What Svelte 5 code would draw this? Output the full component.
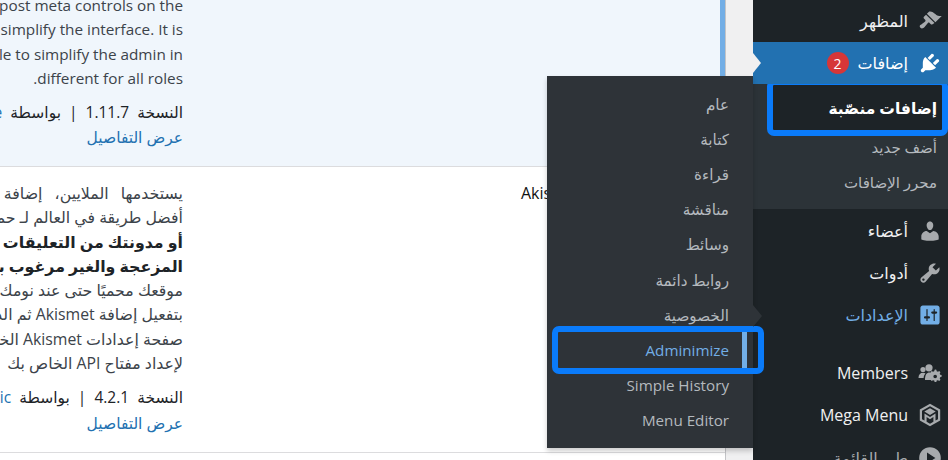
<script>
  const settings = [
    { label: "عام" },
    { label: "كتابة" },
    { label: "قراءة" },
    { label: "مناقشة" },
    { label: "وسائط" },
    { label: "روابط دائمة" },
    { label: "الخصوصية" },
    { label: "Adminimize", current: true },
    { label: "Simple History" },
    { label: "Menu Editor" },
  ];
</script>

<div class="page" dir="rtl">
  <nav class="sidebar">
    <a class="item">
      <svg class="icon" viewBox="0 0 20 20"><path d="M14.48 11.06L7.41 3.99l1.5-1.5c.5-.56 2.3-.47 3.51.32 1.21.8 1.43 1.28 2.91 2.1 1.18.64 2.45 1.26 4.45.85zm-.71.71L6.7 4.7 4.93 6.47c-.39.39-.39 1.02 0 1.41l1.06 1.06c.39.39.39 1.03 0 1.42-.6.6-1.43 1.11-2.21 1.69-.35.26-.7.53-1.01.84C1.43 13.23.91 14.45 2.02 15.56c1.11 1.11 2.33.59 3.67-.75.31-.31.58-.66.84-1.01.58-.78 1.09-1.61 1.69-2.21.39-.39 1.03-.39 1.42 0l1.06 1.06c.39.39 1.02.39 1.41 0z" /></svg>
      <span>المظهر</span>
    </a>
    <a class="item active">
      <svg class="icon" viewBox="0 0 20 20"><path d="M13.11 4.36L9.87 7.6 8 5.73l3.24-3.24c.35-.34 1.05-.2 1.56.32.52.51.66 1.21.31 1.55zm-8 1.77l.91-1.12 9.01 9.01-1.19.84c-.71.71-2.63 1.16-3.82 1.16H6.14L4.9 17.26c-.59.59-1.54.59-2.12 0-.59-.58-.59-1.53 0-2.12l1.24-1.24v-3.88c0-1.13.4-3.19 1.09-3.89zm7.26 3.97l3.24-3.24c.34-.35 1.04-.21 1.55.31.52.51.66 1.21.31 1.55l-3.24 3.25z" /></svg>
      <span>إضافات</span>
      <span class="badge">2</span>
    </a>
    <div class="sub">
      <a class="sub-item boxed">إضافات منصّبة</a>
      <a class="sub-item">أضف جديد</a>
      <a class="sub-item">محرر الإضافات</a>
    </div>
    <a class="item">
      <svg class="icon" viewBox="0 0 20 20"><path d="M10 9.25c-2.27 0-2.73-3.44-2.73-3.44C7 4.02 7.82 2 9.97 2c2.16 0 2.98 2.02 2.71 3.81 0 0-.41 3.44-2.68 3.44zm0 2.57L12.72 10c2.39 0 4.52 2.33 4.52 4.53v2.49s-3.65 1.13-7.24 1.13c-3.65 0-7.24-1.13-7.24-1.13v-2.49c0-2.25 1.94-4.48 4.47-4.48z" /></svg>
      <span>أعضاء</span>
    </a>
    <a class="item">
      <svg class="icon" viewBox="0 0 20 20"><path d="M16.68 9.77c-1.34 1.34-3.3 1.67-4.95.99l-5.41 6.52c-.99.99-2.59.99-3.58 0s-.99-2.59 0-3.57l6.52-5.42c-.68-1.65-.35-3.61.99-4.95 1.28-1.28 3.12-1.62 4.72-1.06l-2.89 2.89 2.82 2.82 2.86-2.87c.53 1.58.18 3.39-1.08 4.67zM3.81 16.21c.4.39 1.04.39 1.43 0 .4-.4.4-1.04 0-1.43-.39-.4-1.03-.4-1.43 0-.39.39-.39 1.03 0 1.43z" /></svg>
      <span>أدوات</span>
    </a>
    <a class="item settings">
      <svg class="icon" viewBox="0 0 20 20"><path d="M18 16V4c0-1.1-.9-2-2-2H4c-1.1 0-2 .9-2 2v12c0 1.1.9 2 2 2h12c1.1 0 2-.9 2-2zM8 11h1c.55 0 1 .45 1 1s-.45 1-1 1H8v1.5c0 .28-.22.5-.5.5s-.5-.22-.5-.5V13H6c-.55 0-1-.45-1-1s.45-1 1-1h1V5.5c0-.28.22-.5.5-.5s.5.22.5.5V11zm5-2h-1c-.55 0-1-.45-1-1s.45-1 1-1h1V5.5c0-.28.22-.5.5-.5s.5.22.5.5V7h1c.55 0 1 .45 1 1s-.45 1-1 1h-1v5.5c0 .28-.22.5-.5.5s-.5-.22-.5-.5V9z" /></svg>
      <span>الإعدادات</span>
    </a>
    <div class="sep"></div>
    <a class="item">
      <svg class="icon" viewBox="0 0 24 24">
        <circle cx="5" cy="8.5" r="2.6" />
        <path d="M0.5 17c0-3.2 1.6-5.2 4.6-5.2 1 0 1.8.2 2.4.6-1.2 1.2-1.8 2.8-1.9 4.6z" />
        <circle cx="11" cy="6.8" r="3.6" />
        <path d="M7 19c0-5 1.6-7.4 4.6-7.4 1.1 0 2 .3 2.8.8-.3 1.7-1.2 2.6-1.2 3.5s.9 1.600 1.100 3.100z" />
        <path fill-rule="evenodd" d="M18 10.500l1.100.2.4 1.500 1.300.5 1.300-.8 1.300 1.300-.8 1.300.5 1.300 1.500.4v1.800l-1.500.4-.5 1.300.8 1.300-1.300 1.300-1.300-.8-1.300.5-.4 1.500h-1.800l-.4-1.500-1.300-.5-1.300.8-1.300-1.300.8-1.300-.5-1.300-1.500-.4v-1.800l1.500-.4.5-1.300-.8-1.300 1.300-1.300 1.300.8 1.300-.5.4-1.500zm-.1 5.300a1.900 1.900 0 1 0 0 3.800 1.900 1.900 0 0 0 0-3.800z" transform="translate(0 -1.500) scale(.96)" />
      </svg>
      <span>Members</span>
    </a>
    <a class="item">
      <svg class="icon" viewBox="0 0 24 24">
        <path fill-rule="evenodd" d="M12 .8l10.200 5.700v11L12 23.200 1.800 17.500v-11zM12 3.300L4 7.800v8.400l2.500 1.400V10.600l5.500 3.500 5.500-3.500v7l2.500-1.400V7.800zM6.300 8.500l5.700 3.400 5.700-3.400L12 5.200zM8.600 14v4.800l3.400 1.900 3.400-1.900V14L12 16.300z" />
      </svg>
      <span>Mega Menu</span>
    </a>
    <a class="item collapse">
      <svg class="icon" viewBox="0 0 20 20"><path fill-rule="evenodd" d="M10 1a9 9 0 1 1 0 18 9 9 0 0 1 0-18zM7.500 5.500v9l7-4.500z" /></svg>
      <span>طي القائمة</span>
    </a>
  </nav>

  <main class="main">
    <div class="table">
      <div class="row selected">
        <div class="name"></div>
        <div class="desc first">
          <p>Plugin that hides post meta controls on the</p>
          <p>edit area to simplify the interface. It is</p>
          <p>It is possible to simplify the admin in</p>
          <p>different for all roles.</p>
          <div class="meta">النسخة 1.11.7 | بواسطة <a>Frank Bültge</a></div>
          <a class="details">عرض التفاصيل</a>
        </div>
      </div>
      <div class="row">
        <div class="name"><strong>Akismet Anti-Spam</strong></div>
        <div class="desc">
          <p class="wide">يستخدمها الملايين، إضافة Akismet قد تكون</p>
          <p>أفضل طريقة في العالم لـ حماية</p>
          <p class="bold">أو مدونتك من التعليقات والمراجعات</p>
          <p class="bold">المزعجة والغير مرغوب بها</p>
          <p>موقعك محميًا حتى عند نومك</p>
          <p>بتفعيل إضافة Akismet ثم الذهاب</p>
          <p>صفحة إعدادات Akismet الخاصة</p>
          <p>لإعداد مفتاح API الخاص بك</p>
          <div class="meta">النسخة 4.2.1 | بواسطة <a>Automattic</a></div>
          <a class="details">عرض التفاصيل</a>
        </div>
      </div>
    </div>
  </main>

  <div class="flyout">
    {#each settings as entry}
      <a class="fly-item" class:current={entry.current}>{entry.label}</a>
    {/each}
  </div>
</div>

<style>
  :global(body) {
    margin: 0;
    background: #f0f0f1;
  }

  .page {
    position: relative;
    display: flex;
    width: 948px;
    height: 460px;
    overflow: hidden;
    background: #f0f0f1;
    font-family: "Open Sans", "DejaVu Sans", sans-serif;
    color: #3c434a;
  }

  .sidebar {
    flex: 0 0 195px;
    background: #1d2327;
    color: #f0f0f1;
  }

  .item {
    position: relative;
    display: flex;
    align-items: center;
    gap: 10px;
    height: 42.4px;
    padding-right: 6px;
    font-size: 16px;
    font-weight: 500;
  }

  .icon {
    flex: none;
    width: 24px;
    height: 24px;
    fill: #a7aaad;
  }

  .active {
    height: 42px;
    background: #2271b1;
    color: #fff;
  }

  .active .icon {
    fill: #fff;
  }

  .active::before {
    content: "";
    position: absolute;
    right: 100%;
    top: 11px;
    border: 10px solid transparent;
    border-left: 8px solid #f0f0f1;
    border-right: 0;
    transform: translateX(8px);
  }

  .badge {
    display: flex;
    align-items: center;
    justify-content: center;
    width: 22px;
    height: 22px;
    border-radius: 50%;
    background: #d63638;
    color: #fff;
    font-size: 14px;
    font-weight: 400;
    margin-right: -1px;
  }

  .sub {
    height: 125px;
    padding: 1px 0 0;
    box-sizing: border-box;
    background: #2c3338;
    color: #b4b9be;
    font-size: 15px;
  }

  .sub-item {
    display: flex;
    align-items: center;
    height: 35px;
    padding-right: 11px;
  }

  .boxed {
    height: 44.5px;
    margin-right: 6px;
    padding-right: 5px;
    width: 164px;
    background: #1d2327;
    color: #fff;
    font-size: 15.5px;
    font-weight: 700;
    outline: 6px solid #0a7bfa;
    border-radius: 1px;
  }

  .settings {
    color: #72aee6;
  }

  .settings .icon {
    fill: #72aee6;
  }

  .settings::before {
    content: "";
    position: absolute;
    right: 100%;
    top: 11px;
    border: 11px solid transparent;
    border-left: 9px solid #2e3338;
    border-right: 0;
    transform: translateX(9px);
    z-index: 3;
  }

  .sep {
    height: 15px;
  }

  .collapse {
    color: #a7aaad;
  }

  .main {
    flex: 1;
    min-width: 0;
    padding-right: 27px;
  }

  .table {
    height: 100%;
    background: #fff;
    border-right: 1px solid #c3c4c7;
    overflow: hidden;
  }

  .row {
    display: flex;
    border-bottom: 1px solid #dcdcde;
    font-size: 15.5px;
  }

  .selected {
    background: #f0f6fc;
    box-shadow: inset -5px 0 0 #72aee6;
  }

  .name {
    flex: 0 0 541px;
    box-sizing: border-box;
    padding: 14px 0 0 337px;
    direction: ltr;
    line-height: 24.3px;
    white-space: nowrap;
    color: #111;
  }

  .name strong {
    font-weight: 500;
    font-size: 16px;
  }

  .desc {
    flex: 1;
    min-width: 0;
    padding: 14px 1px 16.3px 0;
    line-height: 24.3px;
    overflow: hidden;
    white-space: nowrap;
  }

  .desc.first {
    padding-top: 0;
    padding-bottom: 15.5px;
  }

  .first p {
    font-size: 15.3px;
  }

  .first p:first-child {
    margin-top: -7px;
  }

  p {
    margin: 0;
    font-size: 15.8px;
  }

  .wide {
    word-spacing: 8px;
  }

  .bold {
    font-weight: 700;
    color: #1d2327;
  }

  .meta {
    margin-top: 10px;
    color: #1d2327;
    word-spacing: 4px;
  }

  .meta a,
  .details {
    color: #2271b1;
  }

  .details {
    display: block;
    height: 26px;
    line-height: 26px;
  }

  .flyout {
    position: absolute;
    top: 76px;
    right: 195px;
    width: 206px;
    height: 372px;
    box-sizing: border-box;
    padding-top: 10px;
    background: #2e3338;
    box-shadow: 0 3px 5px rgb(0 0 0 / 0.2);
    color: #b4b9be;
    font-size: 15.2px;
  }

  .fly-item {
    display: flex;
    align-items: center;
    height: 35.2px;
    padding-right: 24px;
  }

  .current {
    position: relative;
    height: 36px;
    margin: -0.4px -5px -0.4px 0;
    width: 200px;
    box-sizing: border-box;
    padding-right: 29px;
    color: #72aee6;
    outline: 6px solid #0a7bfa;
    border-radius: 1px;
  }

  .current::after {
    content: "";
    position: absolute;
    top: 0;
    bottom: 0;
    right: 11px;
    width: 5px;
    background: #72aee6;
  }
</style>
